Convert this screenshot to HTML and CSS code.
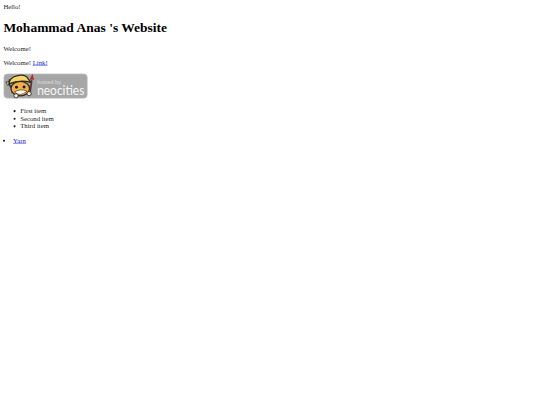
FILE: index.html
```html
<!DOCTYPE html>
<html lang="en">
<head>
<meta charset="utf-8">
<title>Mohammad Anas 's Website</title>
<link rel="stylesheet" href="styles.css">
</head>
<body>
Hello!
<h1>Mohammad Anas 's Website</h1>
<p>Welcome!</p>
<p>Welcome! <a href="#">Link!</a></p>
<a href="#"><svg class="badge" viewBox="0 0 200 60" width="200" height="60" role="img" aria-label="hosted by neocities">
<rect x="1" y="1" width="198" height="58" rx="9" fill="#a6a6a6" stroke="#c4c4c4" stroke-width="2"/>
<path d="M12 24 L30 50" stroke="#3d3a36" stroke-width="4"/>
<path d="M6 20 L10 28 L17 23 L14 14 L12 21Z" fill="#e8e8e8" stroke="#333" stroke-width="2"/>
<ellipse cx="40" cy="36" rx="22" ry="17" fill="#f3b04a" stroke="#2e2a26" stroke-width="3"/>
<path d="M13 25 Q14 9 34 5 Q54 1 60 15 L65 21 Q38 14 13 25Z" fill="#f6d562" stroke="#2e2a26" stroke-width="3"/>
<path d="M26 44 Q40 57 56 42 Q42 35 26 44Z" fill="#fff6e4" stroke="#2e2a26" stroke-width="1.5"/>
<circle cx="31" cy="33" r="3.5" fill="#1d1b19"/>
<circle cx="49" cy="32" r="3.5" fill="#1d1b19"/>
<path d="M67 16 L63 50" stroke="#5d3325" stroke-width="4"/>
<path d="M69 1 L73 15 L62 15Z" fill="#a8342c"/>
<circle cx="30" cy="53" r="5" fill="#f6efe0" stroke="#2e2a26" stroke-width="2"/>
<circle cx="61" cy="48" r="5" fill="#f6efe0" stroke="#2e2a26" stroke-width="2"/>
<text x="80" y="25" class="badge-small">hosted by,</text>
<text transform="translate(80 50) scale(0.86 1)" class="badge-big">neocities</text>
</svg></a>
<ul>
<li>First item</li>
<li>Second item</li>
<li>Third item</li>
</ul>
<ul class="links">
<li><a href="#">Yarn</a></li>
</ul>
</body>
</html>
```
FILE: styles.css
```css
html {
  background: #fff;
}
body {
  box-sizing: border-box;
  width: 620px;
  margin: 0;
  padding: 8px;
  color: #1c1c1c;
  font-family: "Liberation Serif", "Times New Roman", serif;
  transform: scale(0.421875);
  transform-origin: 0 0;
}
h1 {
  color: #000;
}
a {
  color: #1414e0;
}
.badge {
  display: inline;
}
.badge-small {
  font-family: "Liberation Sans", sans-serif;
  font-size: 13px;
  fill: #dedede;
}
.badge-big {
  font-family: "Lato", sans-serif;
  font-weight: 400;
  font-size: 33px;
  fill: #f6f6f6;
}
.links {
  padding-left: 15px;
}
.links a {
  margin-left: 8px;
}
```
